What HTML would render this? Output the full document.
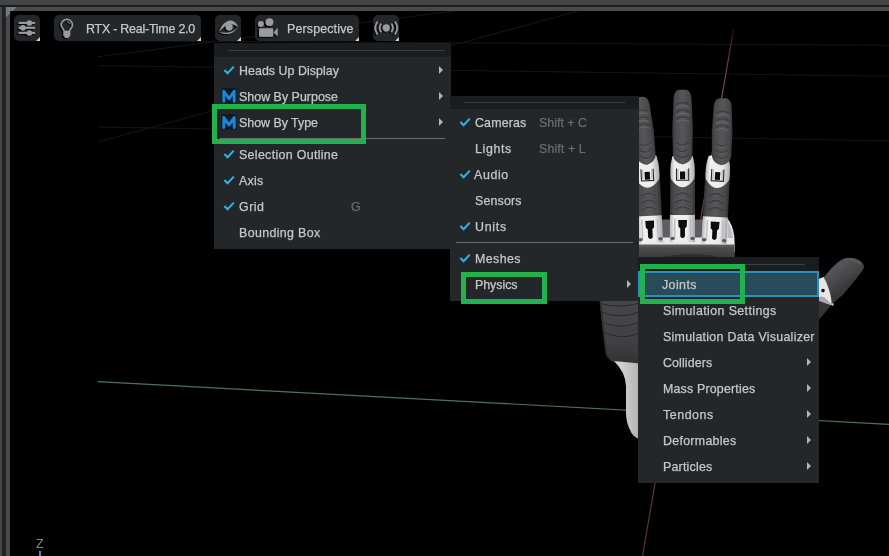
<!DOCTYPE html>
<html><head><meta charset="utf-8"><title>Viewport</title>
<style>
html,body{margin:0;padding:0;background:#000;}
body{width:889px;height:556px;position:relative;overflow:hidden;font-family:"Liberation Sans",sans-serif;font-size:12.4px;color:#c8c8c8;}
.abs{position:absolute;}
.menu{position:absolute;background:#23272a;}
.hdr{position:absolute;left:0;top:0;right:0;background:#1a1d1f;}
.sep{position:absolute;height:1px;background:#6c6c6c;}
.it{position:absolute;will-change:transform;white-space:nowrap;line-height:16px;height:16px;-webkit-text-stroke:0.25px #c8c8c8;}
.sc{color:#6c6f71;-webkit-text-stroke:0.2px #6c6f71;}
.zl{color:#5b8fc2;-webkit-text-stroke:0;}
.arr{position:absolute;width:0;height:0;border-left:4.5px solid #b4b4b4;border-top:4.2px solid transparent;border-bottom:4.2px solid transparent;}
.gbox{position:absolute;border:5px solid #22b14c;box-sizing:border-box;}
.btn{position:absolute;top:15px;height:25.7px;background:#23272a;border-radius:5px;}
.btn:after{content:"";position:absolute;right:0;bottom:0;width:0;height:0;border-left:4px solid transparent;border-bottom:4px solid #d0d0d0;}
svg{position:absolute;left:0;top:0;overflow:visible;}
</style></head><body>
<!-- viewport scene -->
<svg width="889" height="556" viewBox="0 0 889 556">
<defs>
<linearGradient id="gg" x1="0" x2="1" y1="0" y2="0"><stop offset="0" stop-color="#323234"/><stop offset="0.14" stop-color="#4a4a4d"/><stop offset="0.5" stop-color="#565659"/><stop offset="0.86" stop-color="#48484b"/><stop offset="1" stop-color="#303032"/></linearGradient>
<linearGradient id="gw" x1="0" x2="1" y1="0" y2="0"><stop offset="0" stop-color="#b4b4b6"/><stop offset="0.18" stop-color="#f0f0f0"/><stop offset="0.7" stop-color="#ececec"/><stop offset="1" stop-color="#a9a9ab"/></linearGradient>
<linearGradient id="gp" x1="0" x2="0" y1="0" y2="1"><stop offset="0" stop-color="#606062"/><stop offset="0.3" stop-color="#4b4b4d"/><stop offset="1" stop-color="#3b3b3d"/></linearGradient>
<linearGradient id="gwr" x1="0" x2="1" y1="0" y2="0"><stop offset="0" stop-color="#dadada"/><stop offset="0.4" stop-color="#cdcdcd"/><stop offset="1" stop-color="#b0b0b2"/></linearGradient>
<linearGradient id="gred" gradientUnits="userSpaceOnUse" x1="0" y1="30" x2="0" y2="556"><stop offset="0" stop-color="#2a1414"/><stop offset="0.05" stop-color="#6a3c3a"/><stop offset="0.13" stop-color="#86524f"/><stop offset="0.4" stop-color="#704442"/><stop offset="0.85" stop-color="#623a38"/><stop offset="1" stop-color="#5c3634"/></linearGradient>
<linearGradient id="gth" gradientUnits="userSpaceOnUse" x1="835" y1="261" x2="851" y2="283"><stop offset="0" stop-color="#39393b"/><stop offset="0.18" stop-color="#565659"/><stop offset="0.6" stop-color="#49494c"/><stop offset="1" stop-color="#39393b"/></linearGradient>
<filter id="bl" x="-5%" y="-5%" width="110%" height="110%"><feGaussianBlur stdDeviation="0.35"/></filter>
<linearGradient id="gpalm" x1="0" x2="0" y1="0" y2="1"><stop offset="0" stop-color="#464648"/><stop offset="0.6" stop-color="#424244"/><stop offset="1" stop-color="#323234"/></linearGradient>
</defs>
<line x1="97.8" y1="56.7" x2="454.0" y2="11.0" stroke="#161616" stroke-width="1"/>
<line x1="97.8" y1="65.7" x2="889.0" y2="76.2" stroke="#161616" stroke-width="1"/>
<line x1="97.8" y1="127.0" x2="889.0" y2="140.9" stroke="#161616" stroke-width="1"/>
<line x1="97.8" y1="142.0" x2="578.0" y2="11.0" stroke="#161616" stroke-width="1"/>
<line x1="97.8" y1="40.7" x2="889.0" y2="45.3" stroke="#161616" stroke-width="1"/>
<line x1="97.8" y1="381.6" x2="889" y2="424.4" stroke="#4e7357" stroke-width="1.15"/>
<line x1="733.4" y1="30" x2="642.5" y2="556" stroke="url(#gred)" stroke-width="1.15"/>
<g filter="url(#bl)">
<rect x="638" y="219.5" width="89" height="22" fill="#5e5e60"/>
<path d="M638 237.5 L727 237.5 L727 218 Q732.5 224 734.3 236 L735 252 L638 252 Z" fill="#e9e9e9"/>
<path d="M727.5 221 Q731.5 227 733 238 L727.5 238 Z" fill="#bdbdbf"/>
<path d="M638 244.5 L734.6 244.5 L734.8 258 L638 258 Z" fill="url(#gp)"/>
<path d="M660 257.5 Q690 250.5 722 257.5 Z" fill="#2e2e30"/>
<g transform="translate(647.00 169.00) rotate(-2.90)"><path d="M-12.3 5 L12.4 5 L12.5 47.9 L-12.6 47.9 Z" fill="url(#gg)"/><path d="M-7.5 27.0 Q0 21.5 7.5 27.0" fill="none" stroke="#363638" stroke-width="1.3" opacity="0.75"/><path d="M-7 25.4 Q0 20.0 7 25.4" fill="none" stroke="#606063" stroke-width="1" opacity="0.5"/><path d="M-7.5 34.0 Q0 28.5 7.5 34.0" fill="none" stroke="#363638" stroke-width="1.3" opacity="0.75"/><path d="M-7 32.4 Q0 27.0 7 32.4" fill="none" stroke="#606063" stroke-width="1" opacity="0.5"/><path d="M-7.5 41.0 Q0 35.5 7.5 41.0" fill="none" stroke="#363638" stroke-width="1.3" opacity="0.75"/><path d="M-7 39.4 Q0 34.0 7 39.4" fill="none" stroke="#606063" stroke-width="1" opacity="0.5"/><path d="M-12.7 46.9 L12.4 46.9 L12.4 73.9 L-12.7 73.9 Z" fill="url(#gw)"/><path d="M-7.8 50.4 L-7.8 69.9 M7.8 50.4 L7.8 69.9" stroke="#bdbdbf" stroke-width="1.4" fill="none"/><path d="M-4.4 51.9 L4.4 51.9 L4.1 58.5 L2.3 60.5 L2.3 68.5 Q0 71.5 -2.3 68.5 L-2.3 60.5 L-4.1 58.5 Z" fill="#0c0c0e"/><ellipse cx="-10" cy="70.3" rx="2.3" ry="1.7" fill="#5a5a5c"/><ellipse cx="10" cy="70.3" rx="2.3" ry="1.7" fill="#5a5a5c"/><path d="M-10.7 -10 Q-10.5 -13.5 -8 -13.5 L8 -13.5 Q10.5 -13.5 10.7 -10 L11.9 -4 Q12.6 6 11.6 10.5 Q6 18.7 0 18.7 Q-6 18.7 -11.6 10.5 Q-12.6 6 -11.9 -4 Z" fill="url(#gw)"/><path d="M-6.1 0 L-6.1 11.7 L6.1 11.7 L6.1 0" fill="none" stroke="#262628" stroke-width="1.1"/><path d="M-4.6 0.4 L-4.6 10.4 M4.6 0.4 L4.6 10.4" fill="none" stroke="#b4b4b6" stroke-width="1.2"/><rect x="-2.6" y="2.9" width="5.2" height="7.8" fill="#0c0c0e"/><g transform="translate(0.00 0) rotate(-3.00 0 -8)"><path d="M-9.6 -13 L-10.4 -38 L-9.3 -58.4 C-9.3 -66.9 -7.9 -72.2 -2.9 -72.4 L2.7 -72.4 C7.7 -72.2 9.2 -66.9 9.2 -58.4 L10.4 -38 L9.7 -13 Q8.4 -6 0 -4.1 Q-8.4 -6 -9.6 -13 Z" fill="url(#gg)"/><path d="M-6.2 -54.4 Q0 -58.4 6.4 -54.4" fill="none" stroke="#77777a" stroke-width="1.2" opacity="0.55"/><path d="M-6.6 -57.5 Q0 -61.7 6.6 -57.5" fill="none" stroke="#363638" stroke-width="1.3" opacity="0.7"/><path d="M-6.2 -46.9 Q0 -50.9 6.4 -46.9" fill="none" stroke="#77777a" stroke-width="1.2" opacity="0.60"/><path d="M-6.6 -50.0 Q0 -54.2 6.6 -50.0" fill="none" stroke="#363638" stroke-width="1.3" opacity="0.7"/><path d="M-6.2 -40.1 Q0 -44.1 6.4 -40.1" fill="none" stroke="#77777a" stroke-width="1.2" opacity="0.55"/><path d="M-6.6 -43.2 Q0 -47.4 6.6 -43.2" fill="none" stroke="#363638" stroke-width="1.3" opacity="0.7"/><path d="M-6.5 -26.0 Q0 -21.0 6.5 -26.0" fill="none" stroke="#363638" stroke-width="1.2" opacity="0.7"/><path d="M-6 -24.3 Q0 -19.4 6 -24.3" fill="none" stroke="#646467" stroke-width="1" opacity="0.5"/><path d="M-6.5 -19.5 Q0 -14.5 6.5 -19.5" fill="none" stroke="#363638" stroke-width="1.2" opacity="0.7"/><path d="M-6 -17.8 Q0 -12.9 6 -17.8" fill="none" stroke="#646467" stroke-width="1" opacity="0.5"/><path d="M-6.5 -13.5 Q0 -8.5 6.5 -13.5" fill="none" stroke="#363638" stroke-width="1.2" opacity="0.7"/><path d="M-6 -11.8 Q0 -6.9 6 -11.8" fill="none" stroke="#646467" stroke-width="1" opacity="0.5"/></g></g>
<g transform="translate(682.60 168.60) rotate(0.00)"><path d="M-12.3 5 L12.4 5 L12.5 47.4 L-12.6 47.4 Z" fill="url(#gg)"/><path d="M-7.5 27.0 Q0 21.5 7.5 27.0" fill="none" stroke="#363638" stroke-width="1.3" opacity="0.75"/><path d="M-7 25.4 Q0 20.0 7 25.4" fill="none" stroke="#606063" stroke-width="1" opacity="0.5"/><path d="M-7.5 34.0 Q0 28.5 7.5 34.0" fill="none" stroke="#363638" stroke-width="1.3" opacity="0.75"/><path d="M-7 32.4 Q0 27.0 7 32.4" fill="none" stroke="#606063" stroke-width="1" opacity="0.5"/><path d="M-7.5 41.0 Q0 35.5 7.5 41.0" fill="none" stroke="#363638" stroke-width="1.3" opacity="0.75"/><path d="M-7 39.4 Q0 34.0 7 39.4" fill="none" stroke="#606063" stroke-width="1" opacity="0.5"/><path d="M-12.7 46.4 L12.4 46.4 L12.4 73.4 L-12.7 73.4 Z" fill="url(#gw)"/><path d="M-7.8 49.9 L-7.8 69.4 M7.8 49.9 L7.8 69.4" stroke="#bdbdbf" stroke-width="1.4" fill="none"/><path d="M-4.4 51.4 L4.4 51.4 L4.1 58.0 L2.3 60.0 L2.3 68.0 Q0 71.0 -2.3 68.0 L-2.3 60.0 L-4.1 58.0 Z" fill="#0c0c0e"/><ellipse cx="-10" cy="69.8" rx="2.3" ry="1.7" fill="#5a5a5c"/><ellipse cx="10" cy="69.8" rx="2.3" ry="1.7" fill="#5a5a5c"/><path d="M-10.7 -10 Q-10.5 -13.5 -8 -13.5 L8 -13.5 Q10.5 -13.5 10.7 -10 L11.9 -4 Q12.6 6 11.6 10.5 Q6 18.7 0 18.7 Q-6 18.7 -11.6 10.5 Q-12.6 6 -11.9 -4 Z" fill="url(#gw)"/><path d="M-6.1 0 L-6.1 11.7 L6.1 11.7 L6.1 0" fill="none" stroke="#262628" stroke-width="1.1"/><path d="M-4.6 0.4 L-4.6 10.4 M4.6 0.4 L4.6 10.4" fill="none" stroke="#b4b4b6" stroke-width="1.2"/><rect x="-2.6" y="2.9" width="5.2" height="7.8" fill="#0c0c0e"/><g transform="translate(0.00 0) rotate(0.00 0 -8)"><path d="M-9.6 -13 L-10.4 -38 L-9.3 -64.9 C-9.3 -73.4 -7.9 -78.7 -2.9 -78.9 L2.7 -78.9 C7.7 -78.7 9.2 -73.4 9.2 -64.9 L10.4 -38 L9.7 -13 Q8.4 -6 0 -4.1 Q-8.4 -6 -9.6 -13 Z" fill="url(#gg)"/><path d="M-6.2 -60.9 Q0 -64.9 6.4 -60.9" fill="none" stroke="#77777a" stroke-width="1.2" opacity="0.55"/><path d="M-6.6 -64.0 Q0 -68.2 6.6 -64.0" fill="none" stroke="#363638" stroke-width="1.3" opacity="0.7"/><path d="M-6.2 -53.4 Q0 -57.4 6.4 -53.4" fill="none" stroke="#77777a" stroke-width="1.2" opacity="0.60"/><path d="M-6.6 -56.5 Q0 -60.7 6.6 -56.5" fill="none" stroke="#363638" stroke-width="1.3" opacity="0.7"/><path d="M-6.2 -46.6 Q0 -50.6 6.4 -46.6" fill="none" stroke="#77777a" stroke-width="1.2" opacity="0.55"/><path d="M-6.6 -49.7 Q0 -53.9 6.6 -49.7" fill="none" stroke="#363638" stroke-width="1.3" opacity="0.7"/><path d="M-6.5 -26.0 Q0 -21.0 6.5 -26.0" fill="none" stroke="#363638" stroke-width="1.2" opacity="0.7"/><path d="M-6 -24.3 Q0 -19.4 6 -24.3" fill="none" stroke="#646467" stroke-width="1" opacity="0.5"/><path d="M-6.5 -19.5 Q0 -14.5 6.5 -19.5" fill="none" stroke="#363638" stroke-width="1.2" opacity="0.7"/><path d="M-6 -17.8 Q0 -12.9 6 -17.8" fill="none" stroke="#646467" stroke-width="1" opacity="0.5"/><path d="M-6.5 -13.5 Q0 -8.5 6.5 -13.5" fill="none" stroke="#363638" stroke-width="1.2" opacity="0.7"/><path d="M-6 -11.8 Q0 -6.9 6 -11.8" fill="none" stroke="#646467" stroke-width="1" opacity="0.5"/></g></g>
<g transform="translate(717.90 169.30) rotate(3.00)"><path d="M-12.3 5 L12.4 5 L12.5 48.6 L-12.6 48.6 Z" fill="url(#gg)"/><path d="M-7.5 27.0 Q0 21.5 7.5 27.0" fill="none" stroke="#363638" stroke-width="1.3" opacity="0.75"/><path d="M-7 25.4 Q0 20.0 7 25.4" fill="none" stroke="#606063" stroke-width="1" opacity="0.5"/><path d="M-7.5 34.0 Q0 28.5 7.5 34.0" fill="none" stroke="#363638" stroke-width="1.3" opacity="0.75"/><path d="M-7 32.4 Q0 27.0 7 32.4" fill="none" stroke="#606063" stroke-width="1" opacity="0.5"/><path d="M-7.5 41.0 Q0 35.5 7.5 41.0" fill="none" stroke="#363638" stroke-width="1.3" opacity="0.75"/><path d="M-7 39.4 Q0 34.0 7 39.4" fill="none" stroke="#606063" stroke-width="1" opacity="0.5"/><path d="M-12.7 47.6 L12.4 47.6 L12.4 74.6 L-12.7 74.6 Z" fill="url(#gw)"/><path d="M-7.8 51.1 L-7.8 70.6 M7.8 51.1 L7.8 70.6" stroke="#bdbdbf" stroke-width="1.4" fill="none"/><path d="M-4.4 52.6 L4.4 52.6 L4.1 59.2 L2.3 61.2 L2.3 69.2 Q0 72.2 -2.3 69.2 L-2.3 61.2 L-4.1 59.2 Z" fill="#0c0c0e"/><ellipse cx="-10" cy="71.0" rx="2.3" ry="1.7" fill="#5a5a5c"/><ellipse cx="10" cy="71.0" rx="2.3" ry="1.7" fill="#5a5a5c"/><path d="M-10.7 -10 Q-10.5 -13.5 -8 -13.5 L8 -13.5 Q10.5 -13.5 10.7 -10 L11.9 -4 Q12.6 6 11.6 10.5 Q6 18.7 0 18.7 Q-6 18.7 -11.6 10.5 Q-12.6 6 -11.9 -4 Z" fill="url(#gw)"/><path d="M-6.1 0 L-6.1 11.7 L6.1 11.7 L6.1 0" fill="none" stroke="#262628" stroke-width="1.1"/><path d="M-4.6 0.4 L-4.6 10.4 M4.6 0.4 L4.6 10.4" fill="none" stroke="#b4b4b6" stroke-width="1.2"/><rect x="-2.6" y="2.9" width="5.2" height="7.8" fill="#0c0c0e"/><g transform="translate(3.10 0) rotate(-1.60 0 -8)"><path d="M-9.6 -13 L-10.4 -38 L-9.3 -57.2 C-9.3 -65.7 -7.9 -71.0 -2.9 -71.2 L2.7 -71.2 C7.7 -71.0 9.2 -65.7 9.2 -57.2 L10.4 -38 L9.7 -13 Q8.4 -6 0 -4.1 Q-8.4 -6 -9.6 -13 Z" fill="url(#gg)"/><path d="M-6.2 -53.2 Q0 -57.2 6.4 -53.2" fill="none" stroke="#77777a" stroke-width="1.2" opacity="0.55"/><path d="M-6.6 -56.3 Q0 -60.5 6.6 -56.3" fill="none" stroke="#363638" stroke-width="1.3" opacity="0.7"/><path d="M-6.2 -45.7 Q0 -49.7 6.4 -45.7" fill="none" stroke="#77777a" stroke-width="1.2" opacity="0.60"/><path d="M-6.6 -48.8 Q0 -53.0 6.6 -48.8" fill="none" stroke="#363638" stroke-width="1.3" opacity="0.7"/><path d="M-6.2 -38.9 Q0 -42.9 6.4 -38.9" fill="none" stroke="#77777a" stroke-width="1.2" opacity="0.55"/><path d="M-6.6 -42.0 Q0 -46.2 6.6 -42.0" fill="none" stroke="#363638" stroke-width="1.3" opacity="0.7"/><path d="M-6.5 -26.0 Q0 -21.0 6.5 -26.0" fill="none" stroke="#363638" stroke-width="1.2" opacity="0.7"/><path d="M-6 -24.3 Q0 -19.4 6 -24.3" fill="none" stroke="#646467" stroke-width="1" opacity="0.5"/><path d="M-6.5 -19.5 Q0 -14.5 6.5 -19.5" fill="none" stroke="#363638" stroke-width="1.2" opacity="0.7"/><path d="M-6 -17.8 Q0 -12.9 6 -17.8" fill="none" stroke="#646467" stroke-width="1" opacity="0.5"/><path d="M-6.5 -13.5 Q0 -8.5 6.5 -13.5" fill="none" stroke="#363638" stroke-width="1.2" opacity="0.7"/><path d="M-6 -11.8 Q0 -6.9 6 -11.8" fill="none" stroke="#646467" stroke-width="1" opacity="0.5"/></g></g>
<path d="M600 299 L640 299 L640 364 L614 361.8 Q608.5 359 606 354 Q602.5 330 600 299 Z" fill="url(#gpalm)"/>
<path d="M600.7 303.7 Q617.0 308.5 638.6 303.5" fill="none" stroke="#2a2a2c" stroke-width="1"/>
<path d="M601.3 311.9 Q619.0 319.3 638.6 312.3" fill="none" stroke="#2a2a2c" stroke-width="1"/>
<path d="M602.0 322.0 Q620.0 330.2 638.6 322.4" fill="none" stroke="#2a2a2c" stroke-width="1"/>
<path d="M603.2 332.0 Q622.0 341.0 638.6 333.2" fill="none" stroke="#2a2a2c" stroke-width="1"/>
<path d="M600.4 300 Q603 330 606.6 354 Q609 359 614 361.5" fill="none" stroke="#303032" stroke-width="1.8"/>
<path d="M613.5 361 L640 363.5 L640 439.5 Q632 436 630.5 431 Q626.5 424 626 414 L626 386 Q625.5 372 613.5 360.5 Z" fill="url(#gwr)"/>
<path d="M819 299 L826 302 L832 304.2 L819 319.8 Z" fill="#353537"/>
<path d="M818.5 279 L824.2 276.8 L832 290 L833.5 305.8 L826 303 L818.5 300.5 Z" fill="#e6e6e6"/>
<path d="M819 297 Q824 295 826.5 299.5 L833.5 305.8 L826 303.4 L819 300.6 Z" fill="#aaaaac"/>
<circle cx="823" cy="290.6" r="1.8" fill="#141416"/>
<path d="M823.7 277.4 L831.6 268 Q836 263 840.9 260.1 Q845 257.6 848.8 257.7 Q853 257.6 856 258.7 Q860 260 861.8 262.3 Q864.2 264.5 864 266.8 Q863.8 269 861.8 271.6 L853.2 282.4 L843.1 294.6 L833.7 302.6 L831.6 304 Q831.5 296 828 286.7 Q826 281 823.7 277.4 Z" fill="url(#gth)"/>
<path d="M850 259.5 Q857 259.6 860.5 264.5" fill="none" stroke="#6c6c6f" stroke-width="1.6" opacity="0.6"/>
</g>
</svg>
<div class="abs" style="left:39px;top:551px;width:2.1px;height:5px;background:#4d86b8"></div>
<!-- frame -->
<div class="abs" style="left:0;top:0;width:889px;height:5px;background:#454545"></div>
<div class="abs" style="left:0;top:4.7px;width:889px;height:2px;background:#201e1d"></div>
<div class="abs" style="left:0;top:7px;width:2px;height:549px;background:#454545"></div>
<div class="abs" style="left:2px;top:6.5px;width:3.8px;height:550px;background:#1f2123"></div>
<div class="abs" style="left:5.8px;top:6.7px;width:884px;height:4.4px;background:#4a4a4a"></div>
<div class="abs" style="left:5.8px;top:6.7px;width:4.3px;height:550px;background:#4a4a4a"></div>

<svg width="889" height="556"><polygon points="5.8,6.9 17,6.9 12.8,11.1 10.1,11.1 10.1,13.6 5.8,17.6" fill="#6f7c80"/></svg>
<!-- toolbar buttons -->
<div class="btn" style="left:14px;width:26px"></div>
<div class="btn" style="left:54px;width:147px"></div>
<div class="btn" style="left:215px;width:26px"></div>
<div class="btn" style="left:255px;width:104px"></div>
<div class="btn" style="left:373px;width:25.7px"></div>

<!-- menu 1 -->
<div class="menu" style="left:214px;top:43px;width:237px;height:205.7px">
 <div class="hdr" style="height:14px"></div>
 <div class="sep" style="left:14px;right:6px;top:7px;background:#3c3f41"></div>
 <div class="sep" style="left:6px;right:6px;top:94.9px"></div>
 <div class="arr" style="left:225px;top:22.8px"></div>
 <div class="arr" style="left:225px;top:48.8px"></div>
 <div class="arr" style="left:225px;top:74.8px"></div>
</div>

<!-- menu 2 -->
<div class="menu" style="left:450px;top:96px;width:188.6px;height:204.7px">
 <div class="hdr" style="height:13px"></div>
 <div class="sep" style="left:14px;right:14px;top:6px;background:#3c3f41"></div>
 <div class="sep" style="left:6px;right:6px;top:145.8px"></div>
 <div class="arr" style="left:177px;top:183.8px"></div>
</div>

<!-- menu 3 -->
<div class="menu" style="left:638px;top:257px;width:180.7px;height:225.5px">
 <div class="hdr" style="height:14px"></div>
 <div class="sep" style="left:14px;right:14px;top:7px;background:#3c3f41"></div>
 <div class="abs" style="left:0;top:14px;width:180.7px;height:26px;box-sizing:border-box;border:2px solid #2b8fc0;background:#284b5a"></div>
 <div class="arr" style="left:169.3px;top:100.8px"></div>
 <div class="arr" style="left:169.3px;top:126.8px"></div>
 <div class="arr" style="left:169.3px;top:152.8px"></div>
 <div class="arr" style="left:169.3px;top:178.8px"></div>
 <div class="arr" style="left:169.3px;top:204.8px"></div>
</div>
<span class="it " style="left:85.80px;top:20.60px;letter-spacing:-0.207px">RTX - Real-Time 2.0</span>
<span class="it " style="left:286.70px;top:20.60px;letter-spacing:0.165px">Perspective</span>
<span class="it " style="left:238.80px;top:62.90px;letter-spacing:0.052px">Heads Up Display</span>
<span class="it " style="left:238.80px;top:88.90px;letter-spacing:0.032px">Show By Purpose</span>
<span class="it " style="left:238.80px;top:114.90px;letter-spacing:-0.003px">Show By Type</span>
<span class="it " style="left:238.80px;top:146.70px;letter-spacing:0.329px">Selection Outline</span>
<span class="it " style="left:238.50px;top:172.70px;letter-spacing:0.276px">Axis</span>
<span class="it " style="left:238.80px;top:198.70px;letter-spacing:0.509px">Grid</span>
<span class="it sc" style="left:350.80px;top:198.70px;letter-spacing:-0.441px">G</span>
<span class="it " style="left:238.80px;top:224.70px;letter-spacing:0.366px">Bounding Box</span>
<span class="it " style="left:474.80px;top:114.50px;letter-spacing:0.156px">Cameras</span>
<span class="it sc" style="left:538.80px;top:114.50px;letter-spacing:0.009px">Shift + C</span>
<span class="it " style="left:474.80px;top:140.50px;letter-spacing:0.624px">Lights</span>
<span class="it sc" style="left:538.80px;top:140.50px;letter-spacing:0.111px">Shift + L</span>
<span class="it " style="left:474.30px;top:166.50px;letter-spacing:0.624px">Audio</span>
<span class="it " style="left:474.80px;top:192.50px;letter-spacing:0.164px">Sensors</span>
<span class="it " style="left:474.80px;top:218.50px;letter-spacing:0.741px">Units</span>
<span class="it " style="left:474.50px;top:250.50px;letter-spacing:0.422px">Meshes</span>
<span class="it " style="left:474.50px;top:276.50px;letter-spacing:-0.034px">Physics</span>
<span class="it " style="left:661.60px;top:276.70px;letter-spacing:0.425px">Joints</span>
<span class="it " style="left:662.80px;top:302.70px;letter-spacing:0.396px">Simulation Settings</span>
<span class="it " style="left:662.80px;top:328.70px;letter-spacing:0.282px">Simulation Data Visualizer</span>
<span class="it " style="left:662.80px;top:354.70px;letter-spacing:0.125px">Colliders</span>
<span class="it " style="left:662.80px;top:380.70px;letter-spacing:0.191px">Mass Properties</span>
<span class="it " style="left:662.80px;top:406.70px;letter-spacing:0.557px">Tendons</span>
<span class="it " style="left:662.80px;top:432.70px;letter-spacing:0.295px">Deformables</span>
<span class="it " style="left:662.80px;top:458.70px;letter-spacing:0.211px">Particles</span>
<span class="it zl" style="left:36.00px;top:535.70px;letter-spacing:0.122px">Z</span>
<svg width="889" height="556" viewBox="0 0 889 556">
<polyline points="224.4,70.0 227.6,73.3 233.8,66.6" fill="none" stroke="#2eb2ee" stroke-width="2.0" stroke-linejoin="miter"/>
<polyline points="224.4,154.0 227.6,157.3 233.8,150.6" fill="none" stroke="#2eb2ee" stroke-width="2.0" stroke-linejoin="miter"/>
<polyline points="224.4,180.0 227.6,183.3 233.8,176.6" fill="none" stroke="#2eb2ee" stroke-width="2.0" stroke-linejoin="miter"/>
<polyline points="224.4,206.0 227.6,209.3 233.8,202.6" fill="none" stroke="#2eb2ee" stroke-width="2.0" stroke-linejoin="miter"/>
<polyline points="460.4,122.0 463.6,125.3 469.8,118.6" fill="none" stroke="#2eb2ee" stroke-width="2.0" stroke-linejoin="miter"/>
<polyline points="460.4,174.0 463.6,177.3 469.8,170.6" fill="none" stroke="#2eb2ee" stroke-width="2.0" stroke-linejoin="miter"/>
<polyline points="460.4,226.0 463.6,229.3 469.8,222.6" fill="none" stroke="#2eb2ee" stroke-width="2.0" stroke-linejoin="miter"/>
<polyline points="460.4,258.0 463.6,261.3 469.8,254.6" fill="none" stroke="#2eb2ee" stroke-width="2.0" stroke-linejoin="miter"/>
<rect x="221.3" y="88.1" width="15.3" height="15.1" rx="2.2" fill="#0b1c28"/><polyline points="223.8,101.3 223.8,91.3 229.0,98.7 234.2,91.3 234.2,101.3" fill="none" stroke="#1f86d6" stroke-width="2.9" stroke-linecap="round" stroke-linejoin="round"/>
<rect x="221.3" y="114.3" width="15.3" height="15.1" rx="2.2" fill="#0b1c28"/><polyline points="223.8,127.5 223.8,117.5 229.0,124.9 234.2,117.5 234.2,127.5" fill="none" stroke="#1f86d6" stroke-width="2.9" stroke-linecap="round" stroke-linejoin="round"/>
<g filter="url(#sh)">
<rect x="18.7" y="21.90" width="16.4" height="2.0" fill="#9b9b9b"/>
<circle cx="29.4" cy="22.9" r="2.7" fill="#9b9b9b"/>
<rect x="18.7" y="26.80" width="16.4" height="2.0" fill="#9b9b9b"/>
<circle cx="23.0" cy="27.8" r="2.7" fill="#9b9b9b"/>
<rect x="18.7" y="31.90" width="16.4" height="2.0" fill="#9b9b9b"/>
<circle cx="29.4" cy="32.9" r="2.7" fill="#9b9b9b"/>
<path d="M64.1 31 C64.1 28.9 61.3 27.9 61.3 24.9 A5.6 5.6 0 1 1 72.5 24.9 C72.5 27.9 69.7 28.9 69.7 31" fill="none" stroke="#9b9b9b" stroke-width="1.4"/>
<path d="M63.5 30.8 L70.3 30.8 L70.3 35.4 L68.2 37.9 L65.6 37.9 L63.5 35.4 Z" fill="#9b9b9b"/>
<path d="M67 21.6 Q69.4 21.8 70 24" fill="none" stroke="#808080" stroke-width="0.9"/>
<circle cx="229.2" cy="27.1" r="3.5" fill="#9b9b9b"/>
<path d="M219.1 31.5 C221.5 25.5 226 20.4 230.6 20.6 C234.2 20.8 236.8 23.6 238.3 26.9 C236 25.2 233.6 24 230.6 23.9 C226.4 23.9 223 27.4 219.1 31.5 Z" fill="#9b9b9b"/>
<path d="M219.1 31.5 C224 35.4 232 35.6 238.3 26.9 C232 33.6 225 33.6 219.1 31.5 Z" fill="#9b9b9b"/>
<circle cx="260.9" cy="24.1" r="3.0" fill="#9b9b9b"/>
<circle cx="269.5" cy="22.1" r="3.9" fill="#9b9b9b"/>
<rect x="259" y="28.2" width="14.2" height="8.5" rx="1.4" fill="#9b9b9b"/>
<path d="M274 32.3 L277.7 27.6 L277.7 36.3 L274 32.7 Z" fill="#9b9b9b"/>
<circle cx="386.3" cy="27.8" r="3.6" fill="#9b9b9b"/>
<path d="M381.2 23.6 Q378.2 27.8 381.2 32.2" fill="none" stroke="#9b9b9b" stroke-width="1.7"/>
<path d="M391.4 23.6 Q394.4 27.8 391.4 32.2" fill="none" stroke="#9b9b9b" stroke-width="1.7"/>
<path d="M377.6 21.6 Q373.0 27.8 377.6 34.4" fill="none" stroke="#9b9b9b" stroke-width="1.7"/>
<path d="M395.0 21.6 Q399.6 27.8 395.0 34.4" fill="none" stroke="#9b9b9b" stroke-width="1.7"/>
</g>
<defs><filter id="sh" x="-20%" y="-20%" width="140%" height="140%"><feDropShadow dx="-1.5" dy="1.0" stdDeviation="0.35" flood-color="#00000c" flood-opacity="1"/></filter></defs>
</svg>
<!-- green boxes -->
<div class="gbox" style="left:212px;top:104px;width:154px;height:40px"></div>
<div class="gbox" style="left:461px;top:272px;width:86px;height:32px"></div>
<div class="gbox" style="left:640px;top:264px;width:105px;height:39.5px"></div>
</body></html>
